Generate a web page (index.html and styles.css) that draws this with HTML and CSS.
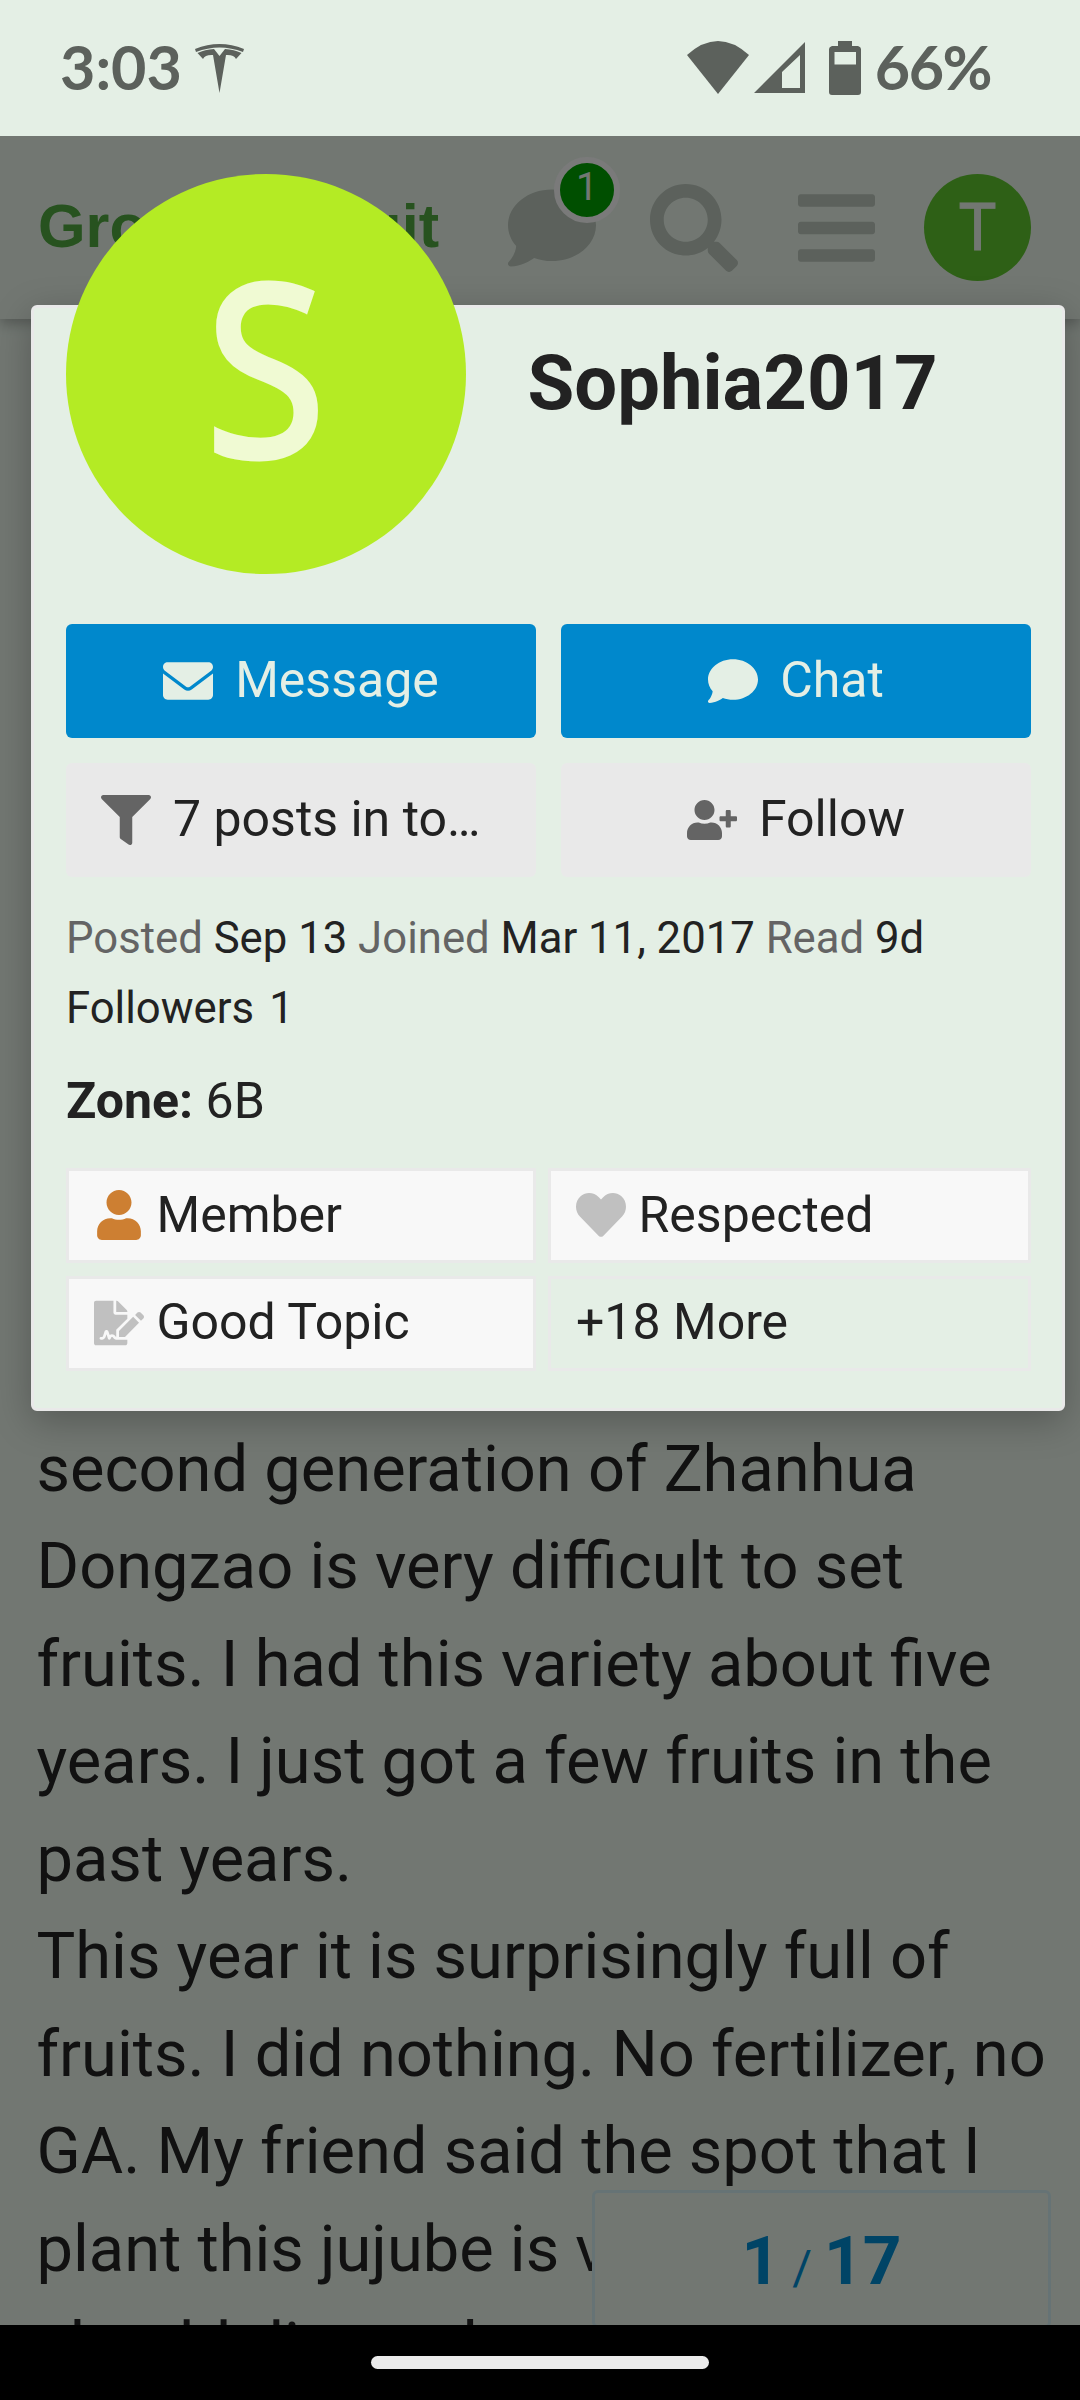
FILE: index.html
```html
<!DOCTYPE html>
<html lang="en">
<head>
<meta charset="utf-8">
<title>Growing Fruit</title>
<link rel="stylesheet" href="styles.css">
</head>
<body>
<div class="statusbar">
  <div class="status-left">
    <span class="clock">3:03</span>
    <svg class="tesla" width="49" height="50" viewBox="0 0 49 50"><path d="M0 5Q24.500-5 49 5L48 8Q24.500-1 1 8Z"/><path d="M2.500 9Q10 5.500 19 5L24.500 12L30 5Q39 5.500 46.500 9L41 15Q39 10.500 31 11L24.500 49L18 11Q10 10.500 8 15Z"/></svg>
  </div>
  <div class="status-right">
    <svg class="wifi" width="62" height="53" viewBox="0 0 62 53"><path d="M0 14Q31-14 62 14L31 53Z"/></svg>
    <svg class="signal" width="51" height="51" viewBox="0 0 51 51"><path fill-rule="evenodd" d="M51 0V51H0ZM46 13L28 30V46H46Z"/></svg>
    <svg class="battery" width="32" height="54" viewBox="0 0 32 54"><path fill-rule="evenodd" d="M9 0H23V5H29Q32 6 32 8V51Q32 54 29 54H3Q0 54 0 51V8Q0 6 3 5H9ZM5.500 11V23.500H27V11Z"/></svg>
    <span class="percent">66%</span>
  </div>
</div>

<main class="app">
  <header class="site-header">
    <span class="logo">Growing Fruit</span>
    <nav class="header-icons">
      <span class="chat-link">
        <svg width="88" height="88" viewBox="0 0 512 512"><path d="M512 240c0 114.900-114.600 208-256 208c-37.100 0-72.300-6.400-104.100-17.900c-11.900 8.700-31.300 20.600-54.300 30.600C73.600 471.100 44.700 480 16 480c-6.500 0-12.300-3.900-14.800-9.900c-2.500-6-1.100-12.800 3.400-17.400l.3-.3c.3-.3.7-.7 1.300-1.400c1.100-1.200 2.800-3.100 4.900-5.700c4.100-5 9.600-12.400 15.200-21.600c10-16.600 19.500-38.400 21.400-62.900C17.700 326.800 0 285.100 0 240C0 125.100 114.600 32 256 32s256 93.100 256 208z"/></svg>
        <span class="unread">1</span>
      </span>
      <svg width="88" height="88" viewBox="0 0 512 512"><path d="M505 442.700L405.300 343c-4.500-4.500-10.600-7-17-7H372c27.600-35.300 44-79.700 44-128C416 93.100 322.900 0 208 0S0 93.100 0 208s93.100 208 208 208c48.300 0 92.700-16.400 128-44v16.300c0 6.400 2.500 12.500 7 17l99.700 99.700c9.400 9.400 24.600 9.400 33.900 0l28.300-28.300c9.400-9.400 9.400-24.600.1-34zM208 336c-70.700 0-128-57.200-128-128 0-70.700 57.200-128 128-128 70.700 0 128 57.200 128 128 0 70.700-57.200 128-128 128z"/></svg>
      <svg class="bars" width="77" height="88" viewBox="0 0 448 512"><path d="M16 132h416c8.837 0 16-7.163 16-16V76c0-8.837-7.163-16-16-16H16C7.163 60 0 67.163 0 76v40c0 8.837 7.163 16 16 16zm0 160h416c8.837 0 16-7.163 16-16v-40c0-8.837-7.163-16-16-16H16c-8.837 0-16 7.163-16 16v40c0 8.837 7.163 16 16 16zm0 160h416c8.837 0 16-7.163 16-16v-40c0-8.837-7.163-16-16-16H16c-8.837 0-16 7.163-16 16v40c0 8.837 7.163 16 16 16z"/></svg>
      <span class="me">T</span>
    </nav>
  </header>

  <article class="post">
    second generation of Zhanhua<br>
    Dongzao is very difficult to set<br>
    fruits. I had this variety about five<br>
    years. I just got a few fruits in the<br>
    past years.<br>
    This year it is surprisingly full of<br>
    fruits. I did nothing. No fertilizer, no<br>
    GA. My friend said the spot that I<br>
    plant this jujube is very<br>
    should dig out her
  </article>

  <div class="progress"><b>1</b><span class="slash">/</span><b>17</b></div>
  <div class="scrim"></div>

  <section class="card">
    <div class="card-top">
      <div class="avatar"><span class="initial">S</span></div>
      <h1 class="name">Sophia2017</h1>
    </div>
    <div class="actions">
      <button class="btn primary"><svg width="50" height="50" viewBox="0 0 512 512"><path d="M48 64C21.500 64 0 85.500 0 112c0 15.100 7.100 29.300 19.200 38.400L236.800 313.600c11.400 8.500 27 8.500 38.400 0L492.800 150.400c12.100-9.100 19.200-23.300 19.200-38.400c0-26.500-21.500-48-48-48H48zM0 180V400c0 26.500 21.500 48 48 48H464c26.500 0 48-21.500 48-48V180L294.400 343c-22.800 17-54 17-76.800 0L0 180z"/></svg><span>Message</span></button>
      <button class="btn primary"><svg width="50" height="50" viewBox="0 0 512 512"><path d="M512 240c0 114.900-114.600 208-256 208c-37.100 0-72.300-6.400-104.100-17.900c-11.900 8.700-31.300 20.600-54.300 30.600C73.600 471.100 44.700 480 16 480c-6.500 0-12.300-3.900-14.800-9.900c-2.500-6-1.100-12.800 3.400-17.400l.3-.3c.3-.3.7-.7 1.300-1.400c1.100-1.200 2.800-3.100 4.900-5.700c4.100-5 9.600-12.400 15.200-21.600c10-16.600 19.500-38.400 21.400-62.900C17.700 326.800 0 285.100 0 240C0 125.100 114.600 32 256 32s256 93.100 256 208z"/></svg><span>Chat</span></button>
      <button class="btn filter"><svg width="50" height="50" viewBox="0 0 512 512"><path d="M487.976 0H24.028C2.710 0-8.047 25.866 7.058 40.971L192 225.941V432c0 7.831 3.821 15.170 10.237 19.662l80 55.980C298.020 518.690 320 507.493 320 487.980V225.941l184.947-184.970C520.021 25.896 509.338 0 487.976 0z"/></svg><span>7 posts in to…</span></button>
      <button class="btn"><svg width="50" height="40" viewBox="0 0 640 512"><path d="M624 208h-64v-64c0-8.800-7.200-16-16-16h-32c-8.800 0-16 7.200-16 16v64h-64c-8.800 0-16 7.200-16 16v32c0 8.800 7.200 16 16 16h64v64c0 8.800 7.200 16 16 16h32c8.800 0 16-7.200 16-16v-64h64c8.800 0 16-7.200 16-16v-32c0-8.800-7.200-16-16-16zm-400 48c70.700 0 128-57.300 128-128S294.700 0 224 0 96 57.300 96 128s57.300 128 128 128zm89.600 32h-16.700c-22.200 10.200-46.900 16-72.900 16s-50.600-5.800-72.900-16h-16.700C60.200 288 0 348.200 0 422.400V464c0 26.500 21.500 48 48 48h352c26.500 0 48-21.500 48-48v-41.600c0-74.200-60.200-134.400-134.400-134.400z"/></svg><span>Follow</span></button>
    </div>
    <div class="meta">
      <div><span class="label">Posted</span> Sep 13 <span class="label">Joined</span> Mar 11, 2017 <span class="label">Read</span> 9d</div>
      <div class="followers"><span>Followers</span><span>1</span></div>
    </div>
    <div class="zone"><b>Zone:</b> 6B</div>
    <div class="badges">
      <div class="badge"><svg class="bronze" width="50" height="50" viewBox="-32 0 512 512"><path d="M224 256c70.700 0 128-57.300 128-128S294.700 0 224 0 96 57.300 96 128s57.300 128 128 128zm89.600 32h-16.700c-22.200 10.200-46.900 16-72.900 16s-50.600-5.800-72.900-16h-16.700C60.200 288 0 348.200 0 422.400V464c0 26.500 21.500 48 48 48h352c26.500 0 48-21.500 48-48v-41.600c0-74.200-60.200-134.400-134.400-134.400z"/></svg>Member</div>
      <div class="badge"><svg class="silver" width="50" height="50" viewBox="0 0 512 512"><path d="M462.300 62.600C407.500 15.900 326 24.300 275.700 76.200L256 96.500l-19.700-20.300C186.100 24.300 104.500 15.900 49.700 62.600c-62.800 53.600-66.100 149.800-9.900 207.900l193.500 199.800c12.500 12.900 32.800 12.900 45.300 0l193.500-199.800c56.300-58.100 53-154.300-9.800-207.900z"/></svg>Respected</div>
      <div class="badge"><svg class="silver" width="50" height="46" viewBox="0 0 576 512"><path d="M218.170 424.140c-2.950-5.920-8.090-6.520-10.170-6.520s-7.220.59-10.020 6.190l-7.670 15.340c-6.370 12.780-25.030 11.370-29.480-2.090L144 386.590l-10.610 31.880c-5.890 17.660-22.380 29.530-41 29.530H80c-8.840 0-16-7.160-16-16s7.160-16 16-16h12.390c4.830 0 9.110-3.080 10.640-7.660l18.190-54.640c3.300-9.810 12.440-16.410 22.780-16.410s19.480 6.590 22.770 16.410l13.880 41.640c19.750-16.190 54.060-9.700 66 14.160 1.890 3.780 5.490 5.950 9.360 6.260v-82.120l128-127.090V160H248c-13.200 0-24-10.800-24-24V0H24C10.700 0 0 10.700 0 24v464c0 13.300 10.700 24 24 24h336c13.300 0 24-10.700 24-24v-40l-128-.11c-16.120-.31-30.580-9.280-37.830-23.750zM384 121.900c0-6.300-2.500-12.400-7-16.900L279.100 7c-4.500-4.500-10.600-7-17-7H256v128h128v-6.100zm-96 225.060V416h68.990l161.680-162.780-67.880-67.880L288 346.960zm280.540-179.630l-31.870-31.870c-9.940-9.940-26.070-9.940-36.010 0l-27.250 27.250 67.880 67.880 27.250-27.250c9.950-9.940 9.950-26.070 0-36.010z"/></svg>Good Topic</div>
      <div class="badge more">+18 More</div>
    </div>
  </section>
</main>

<footer class="gesture"><span class="pill"></span></footer>
</body>
</html>
```
FILE: styles.css
```css
* { box-sizing: border-box; }
body {
  margin: 0;
  width: 1080px;
  height: 2400px;
  overflow: hidden;
  display: flex;
  flex-direction: column;
  background: #e4efe5;
  color: #222;
  font-family: Roboto, "Noto Sans", sans-serif;
}
svg { display: block; flex: none; fill: currentColor; }

/* system status bar */
.statusbar {
  height: 136px;
  flex: none;
  display: flex;
  justify-content: space-between;
  padding: 0 89px 0 60px;
  color: #5c615c;
  font: 700 61px/134px Lato, sans-serif;
}
.status-left, .status-right { display: flex; align-items: flex-start; }
.percent { letter-spacing: -1.5px; }
.tesla { margin: 44px 0 0 13px; }
.wifi { margin: 41px 5px 0 0; }
.signal { margin: 42px 24px 0 0; }
.battery { margin: 41px 14px 0 0; }

/* page behind the card */
.app { position: relative; height: 2189px; flex: none; overflow: hidden; }
.site-header {
  height: 183px;
  display: flex;
  align-items: center;
  justify-content: space-between;
  padding: 0 49px 0 38px;
  box-shadow: 0 5px 12px rgba(0, 0, 0, .25);
}
.logo { padding-bottom: 4px; font: 700 61.2px/70px "Liberation Sans", Arial, sans-serif; color: #4ea53e; }
.header-icons { display: flex; align-items: center; color: #b8c2b8; }
.chat-link { position: relative; margin-right: 54px; }
.bars { margin: 0 49px 0 60px; }
.unread {
  position: absolute;
  left: 46px;
  top: -27px;
  width: 66px;
  height: 66px;
  border: 6px solid #f4f4f4;
  border-radius: 50%;
  background: #009e00;
  color: #e4efe5;
  font-size: 39px;
  line-height: 49px;
  text-align: center;
}
.me {
  width: 107px;
  height: 107px;
  border-radius: 50%;
  background: #5dc12d;
  color: #e4efe5;
  font: 400 65px/103px "Noto Sans", sans-serif;
  -webkit-text-stroke: 1px #e4efe5;
  text-align: center;
}
.post {
  margin-top: 1101.500px;
  padding-left: 36.500px;
  font-size: 65px;
  line-height: 97.5px;
  white-space: nowrap;
}
.progress {
  position: absolute;
  left: 592px;
  top: 2054px;
  width: 459px;
  height: 138px;
  display: flex;
  justify-content: center;
  align-items: baseline;
  padding-top: 28px;
  border: 3px solid #cde6ea;
  border-radius: 6px;
  background: #e4efe5;
  color: #08c;
  font-size: 67.5px;
  line-height: 80px;
}
.slash { font-size: 48px; margin: 0 12px; }
.scrim { position: absolute; inset: 0; background: rgba(0, 0, 0, .5); }

/* user card */
.card {
  position: absolute;
  left: 31px;
  top: 169px;
  width: 1034px;
  height: 1106px;
  padding: 0 31px 0 32px;
  border: 3px solid #e9e9e9;
  border-radius: 6px;
  background: #e4efe5;
  box-shadow: 0 10px 37px rgba(0, 0, 0, .25);
}
.card-top { display: flex; height: 316px; }
.avatar {
  width: 400px;
  height: 400px;
  margin-top: -134px;
  flex: none;
  border-radius: 50%;
  background: #b4eb24;
  color: #f0fad3;
  font: 400 239px/381px "Noto Sans", sans-serif;
  text-align: center;
}
.initial { display: inline-block; transform: scaleX(.92); -webkit-text-stroke: 5px #f0fad3; }
.name { margin: 30px 0 0 61.500px; font-size: 76px; line-height: 90px; font-weight: 700; }
.actions { display: grid; grid-template-columns: 470px 470px; grid-auto-rows: 114px; gap: 25px; }
.btn {
  display: flex;
  align-items: center;
  justify-content: center;
  gap: 22px;
  padding: 0;
  border: 0;
  border-radius: 6px;
  background: #e9e9e9;
  color: #222;
  font: 400 50px/75px Roboto, sans-serif;
}
.btn span { padding-bottom: 2px; }
.btn svg { color: #646464; }
.btn.primary, .btn.primary svg { color: #e4efe5; }
.btn.primary { background: #08c; }
.btn.filter { justify-content: flex-start; padding-left: 35px; }
.meta { margin-top: 26px; font-size: 43.700px; line-height: 70px; white-space: nowrap; }
.label { color: #646464; }
.followers { display: flex; gap: 15px; }
.zone { margin-top: 21px; height: 104px; font-size: 50px; line-height: 75px; }
.badges { display: grid; grid-template-columns: 470px 483px; grid-auto-rows: 95px; gap: 12.500px 12px; }
.badge {
  display: flex;
  align-items: center;
  gap: 12.500px;
  padding: 0 25px 1px;
  border: 3px solid #e9e9e9;
  background: #f8f8f8;
  font-size: 50px;
  line-height: 75px;
}
.badge.more { background: none; }
.bronze { color: #cd7f32; }
.silver { color: silver; }

/* gesture bar */
.gesture { flex: 1; display: flex; justify-content: center; align-items: center; background: #000; }
.pill { width: 338px; height: 13px; border-radius: 7px; background: #ebebeb; }
```
